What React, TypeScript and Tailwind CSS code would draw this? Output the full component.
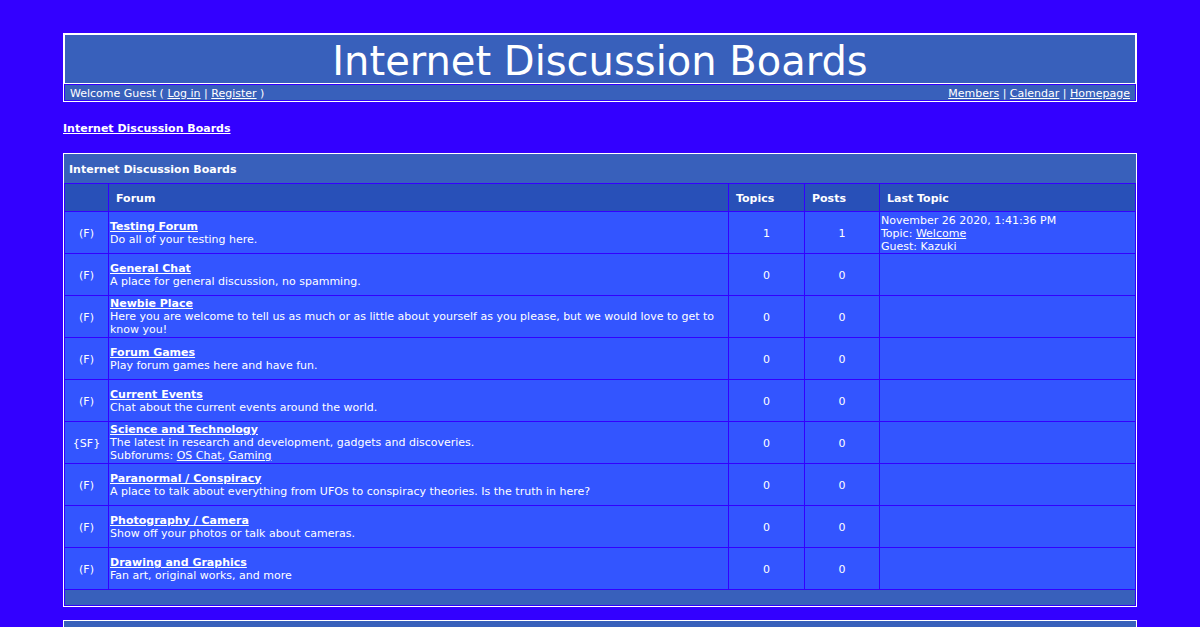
type Link = { name: string };

type Forum = {
  marker: string;
  name: string;
  description: string;
  subforums?: Link[];
  topics: number;
  posts: number;
  last?: { date: string; topic: string; author: string };
};

const forums: Forum[] = [
  {
    marker: '(F)',
    name: 'Testing Forum',
    description: 'Do all of your testing here.',
    topics: 1,
    posts: 1,
    last: { date: 'November 26 2020, 1:41:36 PM', topic: 'Welcome', author: 'Guest: Kazuki' },
  },
  { marker: '(F)', name: 'General Chat', description: 'A place for general discussion, no spamming.', topics: 0, posts: 0 },
  {
    marker: '(F)',
    name: 'Newbie Place',
    description:
      'Here you are welcome to tell us as much or as little about yourself as you please, but we would love to get to know you!',
    topics: 0,
    posts: 0,
  },
  { marker: '(F)', name: 'Forum Games', description: 'Play forum games here and have fun.', topics: 0, posts: 0 },
  { marker: '(F)', name: 'Current Events', description: 'Chat about the current events around the world.', topics: 0, posts: 0 },
  {
    marker: '{SF}',
    name: 'Science and Technology',
    description: 'The latest in research and development, gadgets and discoveries.',
    subforums: [{ name: 'OS Chat' }, { name: 'Gaming' }],
    topics: 0,
    posts: 0,
  },
  {
    marker: '(F)',
    name: 'Paranormal / Conspiracy',
    description: 'A place to talk about everything from UFOs to conspiracy theories. Is the truth in here?',
    topics: 0,
    posts: 0,
  },
  { marker: '(F)', name: 'Photography / Camera', description: 'Show off your photos or talk about cameras.', topics: 0, posts: 0 },
  { marker: '(F)', name: 'Drawing and Graphics', description: 'Fan art, original works, and more', topics: 0, posts: 0 },
];

function A({ children }: { children: string }) {
  return (
    <a href="#" className="underline">
      {children}
    </a>
  );
}

function Header() {
  return (
    <header>
      <div className="border-2 border-b border-white bg-[#3860bb]">
        <h1 className="pt-1 text-center text-[40px] leading-[44px]">Internet Discussion Boards</h1>
      </div>
      <div className="border border-t-0 border-white p-px">
        <div className="flex justify-between bg-[#3860bb] px-[5px] pt-0.5">
          <span>
            Welcome Guest ( <A>Log in</A> | <A>Register</A> )
          </span>
          <nav>
            <A>Members</A> | <A>Calendar</A> | <A>Homepage</A>
          </nav>
        </div>
      </div>
    </header>
  );
}

function ForumRow({ forum }: { forum: Forum }) {
  return (
    <tr className="h-[41px] bg-[#3355ff]">
      <td className="px-px pt-0.5 pb-0 text-center">{forum.marker}</td>
      <td className="p-px">
        <a href="#" className="font-bold underline">
          {forum.name}
        </a>
        <p>{forum.description}</p>
        {forum.subforums && (
          <p>
            Subforums:{' '}
            {forum.subforums.map((s, i) => (
              <span key={s.name}>
                {i > 0 && ', '}
                <A>{s.name}</A>
              </span>
            ))}
          </p>
        )}
      </td>
      <td className="px-px pt-0.5 pb-0 text-center">{forum.topics}</td>
      <td className="px-px pt-0.5 pb-0 text-center">{forum.posts}</td>
      <td className="px-px pt-0.5 pb-0">
        {forum.last && (
          <>
            <p>{forum.last.date}</p>
            <p>
              Topic: <A>{forum.last.topic}</A>
            </p>
            <p>{forum.last.author}</p>
          </>
        )}
      </td>
    </tr>
  );
}

export default function App() {
  return (
    <div className="min-h-screen bg-[#3300ff] pt-[33px] font-['Verdana','DejaVu_Sans',sans-serif] text-[11px] leading-[13px] text-white">
      <div className="mx-auto w-[89.5%]">
        <Header />
        <div className="pt-5 pb-[18px]">
          <a href="#" className="font-bold underline">
            Internet Discussion Boards
          </a>
        </div>
        <main>
          <section className="border border-white">
            <h2 className="bg-[#3860bb] px-[5px] pt-[9px] pb-[7px] font-bold">Internet Discussion Boards</h2>
            <table className="w-full table-fixed border-separate border-spacing-px">
              <colgroup>
                <col className="w-[43px]" />
                <col />
                <col className="w-[75px]" />
                <col className="w-[74px]" />
                <col className="w-[255px]" />
              </colgroup>
              <thead>
                <tr className="bg-[#2850b8] text-left">
                  <th className="px-[7px] pt-2 pb-1.5" />
                  <th className="px-[7px] pt-2 pb-1.5">Forum</th>
                  <th className="px-[7px] pt-2 pb-1.5">Topics</th>
                  <th className="px-[7px] pt-2 pb-1.5">Posts</th>
                  <th className="px-[7px] pt-2 pb-1.5">Last Topic</th>
                </tr>
              </thead>
              <tbody>
                {forums.map((forum) => (
                  <ForumRow key={forum.name} forum={forum} />
                ))}
              </tbody>
              <tfoot>
                <tr>
                  <td colSpan={5} className="h-[15px] bg-[#3860bb] p-0" />
                </tr>
              </tfoot>
            </table>
          </section>
          <section className="mt-[13px] border border-b-0 border-white bg-[#3860bb] pt-1.5" />
        </main>
      </div>
    </div>
  );
}
